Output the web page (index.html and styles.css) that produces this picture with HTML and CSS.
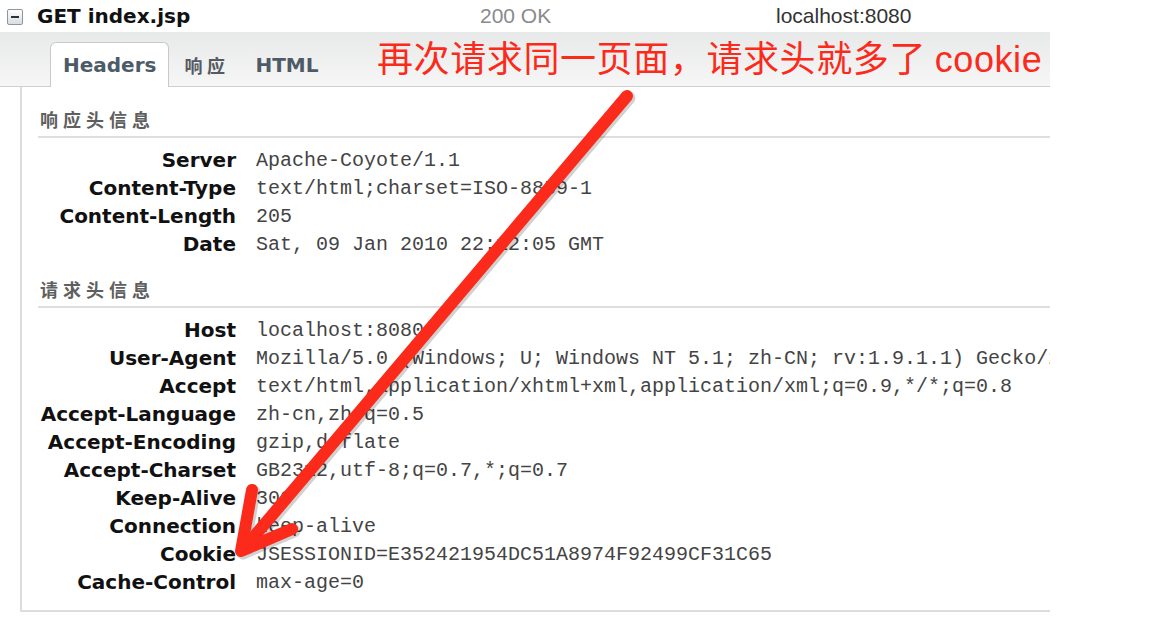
FILE: index.html
```html
<!DOCTYPE html>
<html>
<head>
<meta charset="utf-8">
<link rel="stylesheet" href="styles.css">
</head>
<body>
<div class="page">
  <div class="req">
    <span class="toggle"><span class="dash"></span></span>
    <span class="req-title">GET index.jsp</span>
    <span class="req-status">200 OK</span>
    <span class="req-host">localhost:8080</span>
  </div>
  <div class="tabbar">
    <div class="tab active">Headers</div>
    <div class="tab cjk">响应</div>
    <div class="tab">HTML</div>
  </div>
  <div class="panel">
    <div class="heading">响应头信息</div>
    <div class="rows">
      <div class="k">Server</div><div class="v">Apache-Coyote/1.1</div>
      <div class="k">Content-Type</div><div class="v">text/html;charset=ISO-8859-1</div>
      <div class="k">Content-Length</div><div class="v">205</div>
      <div class="k">Date</div><div class="v">Sat, 09 Jan 2010 22:12:05 GMT</div>
    </div>
    <div class="heading second">请求头信息</div>
    <div class="rows">
      <div class="k">Host</div><div class="v">localhost:8080</div>
      <div class="k">User-Agent</div><div class="v">Mozilla/5.0 (Windows; U; Windows NT 5.1; zh-CN; rv:1.9.1.1) Gecko/20090715 Firefox/3.5.1</div>
      <div class="k">Accept</div><div class="v">text/html,application/xhtml+xml,application/xml;q=0.9,*/*;q=0.8</div>
      <div class="k">Accept-Language</div><div class="v">zh-cn,zh;q=0.5</div>
      <div class="k">Accept-Encoding</div><div class="v">gzip,deflate</div>
      <div class="k">Accept-Charset</div><div class="v">GB2312,utf-8;q=0.7,*;q=0.7</div>
      <div class="k">Keep-Alive</div><div class="v">300</div>
      <div class="k">Connection</div><div class="v">keep-alive</div>
      <div class="k">Cookie</div><div class="v">JSESSIONID=E352421954DC51A8974F92499CF31C65</div>
      <div class="k">Cache-Control</div><div class="v">max-age=0</div>
    </div>
  </div>
  <div class="note">再次请求同一页面，请求头就多了 <span class="latin">cookie</span></div>
  <svg class="arrow" width="1162" height="622" viewBox="0 0 1162 622">
    <g fill="none" stroke="#000" stroke-opacity="0.18" stroke-width="13" stroke-linecap="round" stroke-linejoin="round" transform="translate(2,2)">
      <line x1="627" y1="96" x2="246" y2="546"/>
      <polyline points="252,490 241,551 292,529"/>
    </g>
    <g fill="none" stroke="#fb2a1a" stroke-width="12" stroke-linecap="round" stroke-linejoin="round">
      <line x1="627" y1="96" x2="246" y2="546"/>
      <polyline points="252,490 241,551 292,529"/>
    </g>
  </svg>
</div>
</body>
</html>
```
FILE: styles.css
```css
html, body {
  margin: 0;
  padding: 0;
  background: #fff;
}
.page {
  position: relative;
  width: 1162px;
  height: 622px;
  overflow: hidden;
  font-family: "DejaVu Sans", Verdana, sans-serif;
}
.req {
  height: 32px;
  display: flex;
  align-items: center;
  width: 1050px;
}
.toggle {
  width: 14px;
  height: 14px;
  margin-left: 7px;
  margin-top: 1px;
  border: 1px solid #8e959c;
  border-radius: 2px;
  background: linear-gradient(#fdfdfd, #d9dde1);
  display: flex;
  align-items: center;
  justify-content: center;
}
.dash {
  width: 8px;
  height: 2px;
  background: #2c3136;
}
.req-title {
  margin-left: 14px;
  font-weight: bold;
  font-size: 20px;
  color: #111;
  width: 443px;
}
.req-status {
  font-family: "Liberation Sans", Arial, sans-serif;
  font-size: 21px;
  color: #8a8a8a;
  width: 296px;
}
.req-host {
  font-family: "Liberation Sans", Arial, sans-serif;
  font-size: 21px;
  color: #333;
}
.tabbar {
  width: 1050px;
  height: 55px;
  box-sizing: border-box;
  border-bottom: 1px solid #cfcfcf;
  background: linear-gradient(#e8e9e9, #f6f6f6);
  display: flex;
  align-items: flex-end;
  padding-left: 50px;
}
.tab {
  height: 43px;
  line-height: 44px;
  padding: 0 12px;
  font-size: 20px;
  font-weight: bold;
  color: #4d5a67;
}
.tab.cjk {
  font-family: "Noto Sans CJK SC", sans-serif;
  font-weight: bold;
  font-size: 18px;
  letter-spacing: 4.5px;
  color: #555b62;
  padding: 0 14px 0 15px;
}
.tab.active {
  background: #fff;
  border: 1px solid #c9c9c9;
  border-bottom: none;
  border-radius: 6px 6px 0 0;
  margin-bottom: -1px;
  height: 44px;
}
.panel {
  width: 1030px;
  height: 525px;
  box-sizing: border-box;
  margin-left: 20px;
  border-left: 2px solid #dcdcdc;
  border-bottom: 2px solid #dcdcdc;
  padding: 18px 0 0 16px;
}
.heading {
  font-family: "Noto Sans CJK SC", sans-serif;
  font-weight: bold;
  font-size: 18px;
  letter-spacing: 5px;
  padding-left: 2px;
  color: #5f5f5f;
  line-height: 28px;
  padding-bottom: 3px;
  border-bottom: 2px solid #dedede;
}
.heading.second {
  margin-top: 17px;
}
.rows {
  margin-top: 8px;
  display: grid;
  grid-template-columns: 198px auto;
  column-gap: 20px;
  grid-auto-rows: 28px;
  align-items: center;
}
.k {
  text-align: right;
  font-weight: bold;
  font-size: 20px;
  color: #111;
  white-space: nowrap;
}
.v {
  font-family: "Liberation Mono", "Courier New", monospace;
  font-size: 20px;
  color: #444;
  white-space: nowrap;
  overflow: hidden;
}
.note {
  position: absolute;
  left: 377px;
  top: 31px;
  font-family: "Noto Sans CJK SC", sans-serif;
  font-size: 36px;
  letter-spacing: 0.6px;
  line-height: 50px;
  color: #fb2a1a;
  white-space: nowrap;
}
.note .latin {
  font-family: "Liberation Sans", Arial, sans-serif;
}
.arrow {
  position: absolute;
  left: 0;
  top: 0;
  pointer-events: none;
}
```
